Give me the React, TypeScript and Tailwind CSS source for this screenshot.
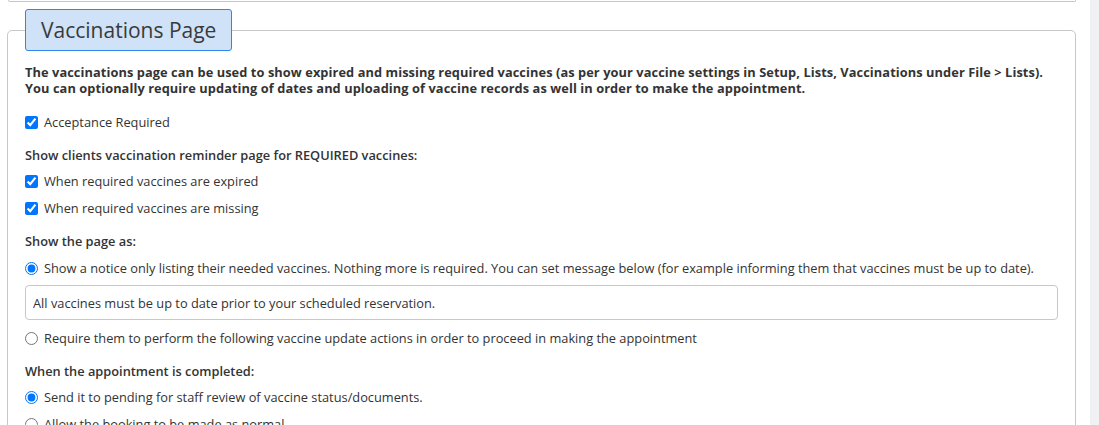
const checks = [
  'When required vaccines are expired',
  'When required vaccines are missing',
]

const Check = ({ label, checked }: { label: string; checked?: boolean }) => (
  <label className="flex items-center h-4 gap-[6px]">
    <input type="checkbox" defaultChecked={checked} className="m-0 w-[13px] h-[13px] accent-[#0075ff]" />
    <span>{label}</span>
  </label>
)

const Radio = ({ label, checked, name }: { label: string; checked?: boolean; name: string }) => (
  <label className="flex items-center h-4 gap-[6px] whitespace-nowrap">
    <input type="radio" name={name} defaultChecked={checked} className="m-0 w-[13px] h-[13px] accent-[#0075ff]" />
    <span>{label}</span>
  </label>
)

export default function App() {
  return (
    <div
      className="flex h-[425px] overflow-hidden bg-white text-[12.8px] leading-4 text-[#333]"
      style={{ fontFamily: '"Open Sans", "Noto Sans", sans-serif' }}
    >
      <div className="flex-1 pl-[7px] pr-[14px]">
        {/* previous card bottom */}
        <div className="ml-px h-[2px] border border-t-0 border-[#c6c6c6] rounded-b-[5px]" />

        <fieldset className="mt-[7px] border border-[#c8c8c8] rounded-[5px] pl-[17px] pr-[17px] pb-4">
          <legend className="h-[42px] px-[15px] flex items-center bg-[#cfe2f7] border border-[#2f86eb] rounded-[3px] text-[21px] text-[#3a3a3a]">
            Vaccinations Page
          </legend>

          <p className="mt-[13px] font-bold whitespace-nowrap tracking-[0.08px]">
            The vaccinations page can be used to show expired and missing required vaccines (as per your vaccine settings in Setup, Lists, Vaccinations under File &gt; Lists).
            <br />
            You can optionally require updating of dates and uploading of vaccine records as well in order to make the appointment.
          </p>

          <div className="mt-[18px]">
            <Check label="Acceptance Required" checked />
          </div>

          <p className="mt-[17px] font-semibold">Show clients vaccination reminder page for REQUIRED vaccines:</p>
          <div className="mt-[10px] flex flex-col gap-[11px]">
            {checks.map((c) => (
              <Check key={c} label={c} checked />
            ))}
          </div>

          <p className="mt-[17px] font-semibold">Show the page as:</p>
          <div className="mt-[11px]">
            <Radio
              name="show"
              checked
              label="Show a notice only listing their needed vaccines. Nothing more is required. You can set message below (for example informing them that vaccines must be up to date)."
            />
          </div>
          <input
            type="text"
            defaultValue="All vaccines must be up to date prior to your scheduled reservation."
            className="mt-[9px] block w-full h-[35px] px-[7px] border border-[#c8c8c8] rounded-[4px] text-[#333] outline-none"
          />
          <div className="mt-[10px]">
            <Radio name="show" label="Require them to perform the following vaccine update actions in order to proceed in making the appointment" />
          </div>

          <p className="mt-[17px] font-semibold">When the appointment is completed:</p>
          <div className="mt-[10px] flex flex-col gap-[11px]">
            <Radio name="done" checked label="Send it to pending for staff review of vaccine status/documents." />
            <Radio name="done" label="Allow the booking to be made as normal." />
          </div>
        </fieldset>
      </div>
      <div className="w-[9px] bg-[#f1f1f4]" />
    </div>
  )
}
